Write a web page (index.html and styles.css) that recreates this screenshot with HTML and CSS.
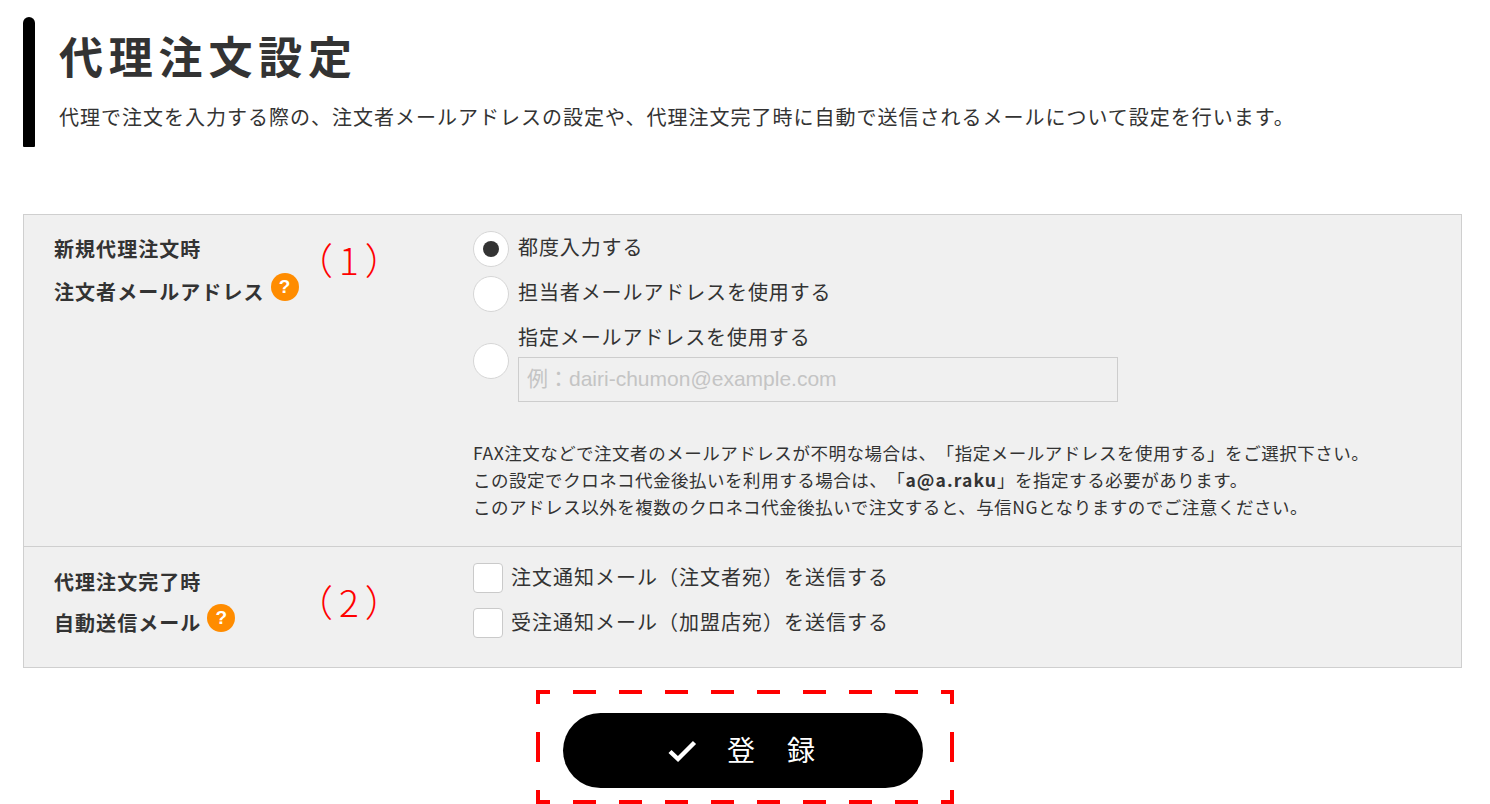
FILE: index.html
```html
<!DOCTYPE html>
<html lang="ja">
<head>
<meta charset="utf-8">
<title>代理注文設定</title>
<link rel="stylesheet" href="styles.css">
</head>
<body>
<header class="head">
  <div class="bar"></div>
  <div class="head-text">
    <h1 class="title">代理注文設定</h1>
    <p class="lead">代理で注文を入力する際の、注文者メールアドレスの設定や、代理注文完了時に自動で送信されるメールについて設定を行います。</p>
  </div>
</header>
<section class="panel">
  <div class="row row-a">
    <div class="label">
      <div class="label-line">新規代理注文時</div>
      <div class="label-line label-second">注文者メールアドレス<span class="help">?</span></div>
      <span class="mark mark-a">（1）</span>
    </div>
    <div class="field">
      <div class="radio-line r1"><span class="radio on"></span><span class="txt">都度入力する</span></div>
      <div class="radio-line r2"><span class="radio"></span><span class="txt">担当者メールアドレスを使用する</span></div>
      <div class="radio-line r3"><span class="radio"></span>
        <div class="stack"><span class="stack-label">指定メールアドレスを使用する</span><div class="input">例：dairi-chumon@example.com</div></div>
      </div>
      <p class="note">FAX注文などで注文者のメールアドレスが不明な場合は、「指定メールアドレスを使用する」をご選択下さい。<br>この設定でクロネコ代金後払いを利用する場合は、「<b>a@a.raku</b>」を指定する必要があります。<br>このアドレス以外を複数のクロネコ代金後払いで注文すると、与信NGとなりますのでご注意ください。</p>
    </div>
  </div>
  <div class="row row-b">
    <div class="label">
      <div class="label-line">代理注文完了時</div>
      <div class="label-line label-second">自動送信メール<span class="help">?</span></div>
      <span class="mark mark-b">（2）</span>
    </div>
    <div class="field">
      <div class="check-line"><span class="check"></span><span class="txt">注文通知メール（注文者宛）を送信する</span></div>
      <div class="check-line"><span class="check"></span><span class="txt">受注通知メール（加盟店宛）を送信する</span></div>
    </div>
  </div>
</section>
<div class="action">
  <div class="dash">
    <button class="submit" type="button">
      <svg class="tick" width="30" height="24" viewBox="0 0 30 24"><path d="M3 12.5l8 7.5L27.5 3.5" fill="none" stroke="#fff" stroke-width="4.4"/></svg>
      <span>登</span><span class="second">録</span>
    </button>
  </div>
</div>
</body>
</html>
```
FILE: styles.css
```css
* { box-sizing: border-box; }
html, body { margin: 0; height: 804px; overflow: hidden; background: #fff; }
body { font-family: "Noto Sans CJK JP", "Liberation Sans", sans-serif; color: #333; text-spacing-trim: space-all; }
.head { display: flex; gap: 24px; margin: 17px 28px 0 23px; height: 130px; }
.bar { flex: none; width: 12px; background: #000; border-radius: 6px 6px 1px 1px; }
.head-text { padding-top: 10px; }
.title { margin: 0; font-size: 44px; line-height: 56px; font-weight: 700; letter-spacing: 5.8px; color: #333; }
.lead { margin: 20px 0 0; font-size: 20px; line-height: 28px; letter-spacing: 1px; white-space: nowrap; }
.panel { margin: 67px 28px 0 23px; background: #f0f0f0; border: 1px solid #cfcfcf; }
.row { display: flex; }
.row-a { height: 332px; border-bottom: 1px solid #cfcfcf; }
.row-b { height: 120px; }
.label { position: relative; width: 449px; padding-left: 30px; font-weight: 700; font-size: 20px; letter-spacing: 1.05px; }
.row-a .label { padding-top: 20px; }
.row-b .label { padding-top: 21px; }
.label-line { height: 28px; line-height: 28px; white-space: nowrap; display: flex; align-items: center; }
.label-second { margin-top: 15px; }
.row-b .label-second { margin-top: 13px; }
.help { width: 28px; height: 28px; margin: -10px 0 0 6px; border-radius: 50%; background: #ff8c00; color: #fff; font-family: "Liberation Sans", sans-serif; font-size: 19px; font-weight: 700; line-height: 28px; text-align: center; letter-spacing: 0; }
.mark { position: absolute; left: 272px; font-size: 37px; line-height: 44px; font-weight: 300; color: #f00; letter-spacing: 6px; white-space: nowrap; }
.mark-a { top: 22px; }
.mark-b { top: 32px; }
.field { flex: 1; font-size: 20px; letter-spacing: .9px; }
.txt { margin-top: -3px; }
.radio-line .txt { margin-top: -5px; }
.check-line .txt { letter-spacing: 1px; }
.radio-line { display: flex; align-items: center; gap: 9px; }
.r1 { margin-top: 16px; height: 36px; }
.r2 { margin-top: 9px; height: 36px; }
.r3 { margin-top: 11px; }
.radio { position: relative; flex: none; width: 36px; height: 36px; border-radius: 50%; background: #fff; border: 1px solid #d6d6d6; }
.r3 .radio { margin-top: -3px; }
.radio.on::after { content: ""; position: absolute; left: 9px; top: 9px; width: 16px; height: 16px; border-radius: 50%; background: #333; }
.stack { display: flex; flex-direction: column; }
.stack-label { line-height: 28px; }
.input { width: 600px; height: 45px; margin-top: 6px; border: 1.5px solid #cdcdcd; padding-left: 8px; line-height: 42px; font-family: "Liberation Sans", "Noto Sans CJK JP", sans-serif; font-size: 21px; letter-spacing: 0; color: #c4c4c4; background: #f0f0f0; }
.note { margin: 37px 0 0; font-size: 17.5px; line-height: 27px; letter-spacing: .53px; white-space: nowrap; }
.note b { letter-spacing: 1.1px; }
.row-b .field { padding-top: 16px; }
.check-line { display: flex; align-items: center; gap: 8px; height: 30px; margin-bottom: 15px; }
.check { flex: none; width: 30px; height: 30px; border-radius: 4px; background: #fff; border: 1.5px solid #cacaca; }
.action { display: flex; justify-content: center; margin-top: 22px; }
.dash { width: 418px; height: 114px; padding: 23px 0 0 27px; background:
  repeating-linear-gradient(90deg, #f00 0 23px, transparent 23px 46px) 37px 0 / 381px 4px no-repeat,
  repeating-linear-gradient(90deg, #f00 0 23px, transparent 23px 46px) 37px 110px / 381px 4px no-repeat,
  linear-gradient(#f00, #f00) 0 0 / 14px 4px no-repeat,
  linear-gradient(#f00, #f00) 0 110px / 14px 4px no-repeat,
  linear-gradient(#f00, #f00) 0 0 / 4px 14px no-repeat,
  linear-gradient(#f00, #f00) 0 42px / 4px 30px no-repeat,
  linear-gradient(#f00, #f00) 0 100px / 4px 14px no-repeat,
  linear-gradient(#f00, #f00) 414px 0 / 4px 14px no-repeat,
  linear-gradient(#f00, #f00) 414px 42px / 4px 30px no-repeat,
  linear-gradient(#f00, #f00) 414px 100px / 4px 14px no-repeat; }
.submit { display: flex; align-items: center; justify-content: center; width: 360px; height: 75px; padding: 0 4px 0 0; border: 0; border-radius: 38px; background: #000; color: #fff; font-family: inherit; font-size: 28px; line-height: 34px; }
.submit span { margin-top: -4px; }
.tick { margin-right: 30px; }
.submit .second { margin-left: 32px; }
```
